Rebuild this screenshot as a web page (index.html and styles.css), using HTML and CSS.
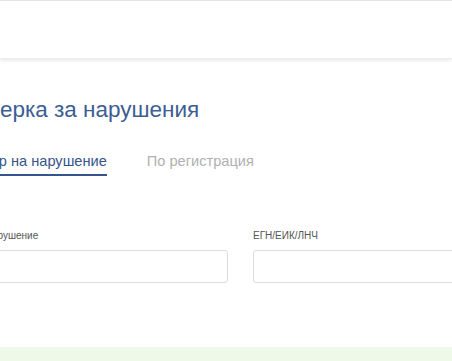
FILE: index.html
```html
<!DOCTYPE html>
<html lang="bg">
<head>
    <meta charset="UTF-8">
    <meta name="viewport" content="width=device-width, initial-scale=1.0">
    <title>Проверка за нарушения</title>
    <link rel="stylesheet" href="styles.css">
</head>
<body>
    <header class="topbar"></header>

    <main class="page">
        <h1 class="page-title">Проверка за нарушения</h1>

        <nav class="tabs">
            <a class="tab active" href="#">Номер на нарушение</a>
            <a class="tab" href="#">По регистрация</a>
        </nav>

        <form class="search-form">
            <div class="field">
                <label for="violation">Номер на нарушение</label>
                <input id="violation" type="text">
            </div>
            <div class="field">
                <label for="egn">ЕГН/ЕИК/ЛНЧ</label>
                <input id="egn" type="text">
            </div>
        </form>
    </main>

    <section class="notice"></section>
</body>
</html>
```

FILE: styles.css
```css
html, body {
    margin: 0;
    padding: 0;
    overflow: hidden;
}
body {
    font-family: "Liberation Sans", Arial, sans-serif;
    background: #fff;
    color: #333;
}
.topbar {
    height: 57px;
    background: #fff;
    border-top: 1px solid #e4e4e4;
    box-shadow: 0 2px 3px rgba(0, 0, 0, 0.08);
    border-bottom: 1px solid #ececec;
}
.page {
    margin-left: -53px;
    padding-top: 38px;
    height: 250px;
}
.page-title {
    margin: 0;
    font-size: 22.5px;
    font-weight: normal;
    line-height: 26px;
    color: #3c5d94;
}
.tabs {
    display: flex;
    gap: 40px;
    margin-top: 28px;
    padding-left: 15px;
}
.tab {
    font-size: 14.6px;
    line-height: 20px;
    padding-bottom: 3px;
    color: #b0b0b0;
    text-decoration: none;
    border-bottom: 2px solid transparent;
}
.tab.active {
    color: #34558a;
    border-bottom-color: #34558a;
}
.search-form {
    display: grid;
    grid-template-columns: 289px 289px;
    gap: 25px;
    margin-top: 54px;
    margin-left: -8px;
}
.field label {
    display: block;
    font-size: 10px;
    line-height: 12px;
    color: #555;
    margin-bottom: 8px;
}
.field input {
    display: block;
    box-sizing: border-box;
    width: 100%;
    height: 33px;
    border: 1px solid #dcdcdc;
    border-radius: 3px;
    background: #fff;
}
.notice {
    height: 40px;
    background: #eef9e8;
}
```
